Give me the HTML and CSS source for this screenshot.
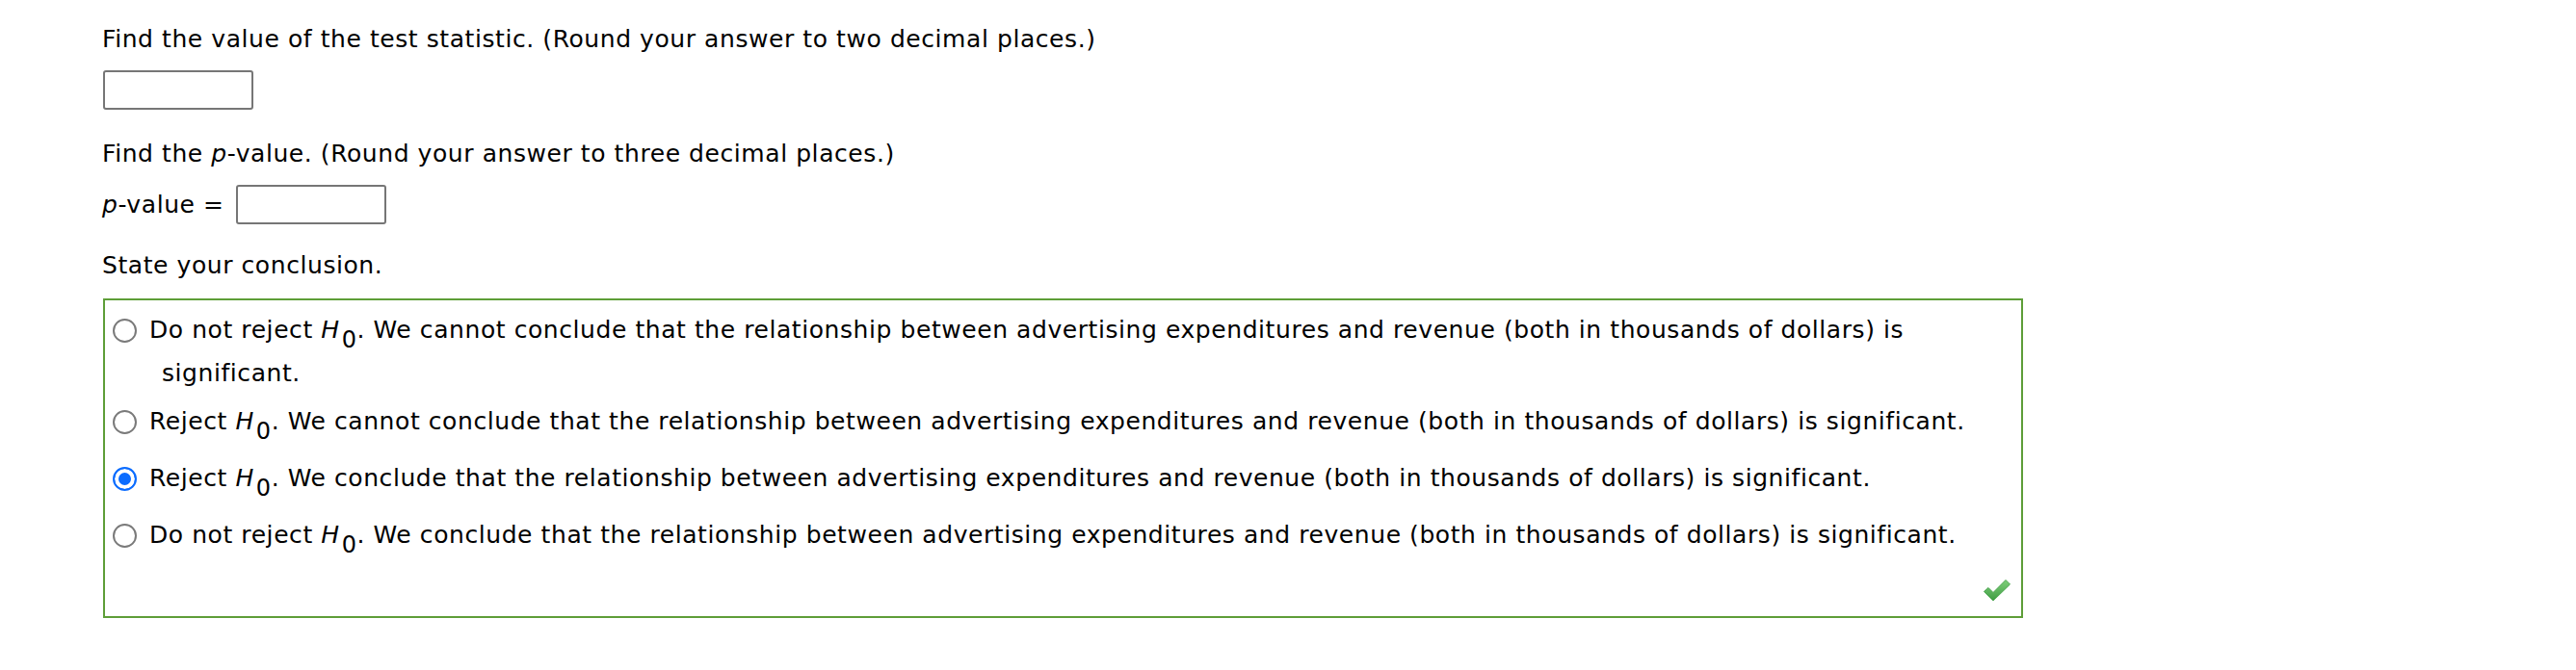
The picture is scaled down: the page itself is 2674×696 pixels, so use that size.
FILE: index.html
```html
<!DOCTYPE html>
<html>
<head>
<meta charset="utf-8">
<link rel="stylesheet" href="styles.css">
</head>
<body>
<div class="page">
  <p class="q q1">Find the value of the test statistic. (Round your answer to two decimal places.)</p>
  <div class="answer-row row1"><input class="ans" type="text"></div>
  <p class="q q2">Find the <i>p</i>-value. (Round your answer to three decimal places.)</p>
  <div class="answer-row row2"><span class="lbl"><i>p</i>-value = </span><input class="ans" type="text"></div>
  <p class="q q3">State your conclusion.</p>
  <div class="choices">
    <label class="opt"><input type="radio" name="c"><span class="txt">Do not reject <i>H</i><span class="sub">0</span>. We cannot conclude that the relationship between advertising expenditures and revenue (both in thousands of dollars) is significant.</span></label>
    <label class="opt"><input type="radio" name="c"><span class="txt">Reject <i>H</i><span class="sub">0</span>. We cannot conclude that the relationship between advertising expenditures and revenue (both in thousands of dollars) is significant.</span></label>
    <label class="opt"><input type="radio" name="c" checked><span class="txt">Reject <i>H</i><span class="sub">0</span>. We conclude that the relationship between advertising expenditures and revenue (both in thousands of dollars) is significant.</span></label>
    <label class="opt"><input type="radio" name="c"><span class="txt">Do not reject <i>H</i><span class="sub">0</span>. We conclude that the relationship between advertising expenditures and revenue (both in thousands of dollars) is significant.</span></label>
    <div class="mark-row">
      <svg class="check" width="30" height="24" viewBox="0 0 30 24">
        <defs>
          <linearGradient id="g" x1="0" y1="0" x2="0" y2="1">
            <stop offset="0" stop-color="#7fcf7a"/>
            <stop offset="1" stop-color="#3f9c43"/>
          </linearGradient>
        </defs>
        <path d="M1.5 13.5 L6 9.5 L11 14.5 L24 1.5 L28.5 6 L11 23 Z" fill="url(#g)" stroke="#4aa54e" stroke-width="1" stroke-linejoin="round"/>
      </svg>
    </div>
  </div>
</div>
</body>
</html>
```

FILE: styles.css
```css
html, body {
  margin: 0;
  padding: 0;
  background: #fff;
}
body {
  font-family: "DejaVu Sans", Verdana, sans-serif;
  font-size: 25px;
  letter-spacing: 0.57px;
  line-height: 36px;
  color: #000;
}
.page {
  padding: 23px 0 0 106px;
}
.q {
  margin: 0;
}
.answer-row {
  display: flex;
  align-items: center;
}
.row1 {
  margin-top: 14px;
}
.q2 {
  margin-top: 28px;
}
.row2 {
  margin-top: 14px;
}
.lbl {
  margin-right: 4px;
  white-space: pre;
}
.q3 {
  margin-top: 25px;
}
.ans {
  box-sizing: border-box;
  width: 156px;
  height: 41px;
  border: 2px solid #767676;
  border-radius: 3px;
  margin: 0;
  padding: 0;
  font: inherit;
  background: #fff;
}
.row1 .ans {
  margin-left: 1px;
}
.choices {
  box-sizing: border-box;
  width: 1993px;
  margin-top: 16px;
  margin-left: 1px;
  border: 2px solid #5e9e38;
  padding: 13px 40px 15px 6px;
  display: flex;
  flex-direction: column;
  gap: 14px;
}
.opt {
  display: flex;
  align-items: flex-start;
}
.opt input[type="radio"] {
  appearance: none;
  -webkit-appearance: none;
  box-sizing: border-box;
  width: 25px;
  height: 25px;
  margin: 6px 13px 0 2px;
  flex: none;
  border: 2px solid #7a7a7a;
  border-radius: 50%;
  background: #fff;
}
.opt input[type="radio"]:checked {
  border-color: #0b6cff;
  background: #0b6cff;
  box-shadow: inset 0 0 0 4px #fff;
}
.txt {
  display: block;
  padding-left: 13px;
  text-indent: -13px;
}
.sub {
  display: inline-block;
  font-size: 24px;
  line-height: 20px;
  vertical-align: -10px;
  padding-bottom: 7px;
  margin-left: 2px;
  text-indent: 0;
}
.mark-row {
  display: flex;
  justify-content: flex-end;
  margin-top: 4px;
  margin-right: -30px;
}
.check {
  display: block;
}
```
